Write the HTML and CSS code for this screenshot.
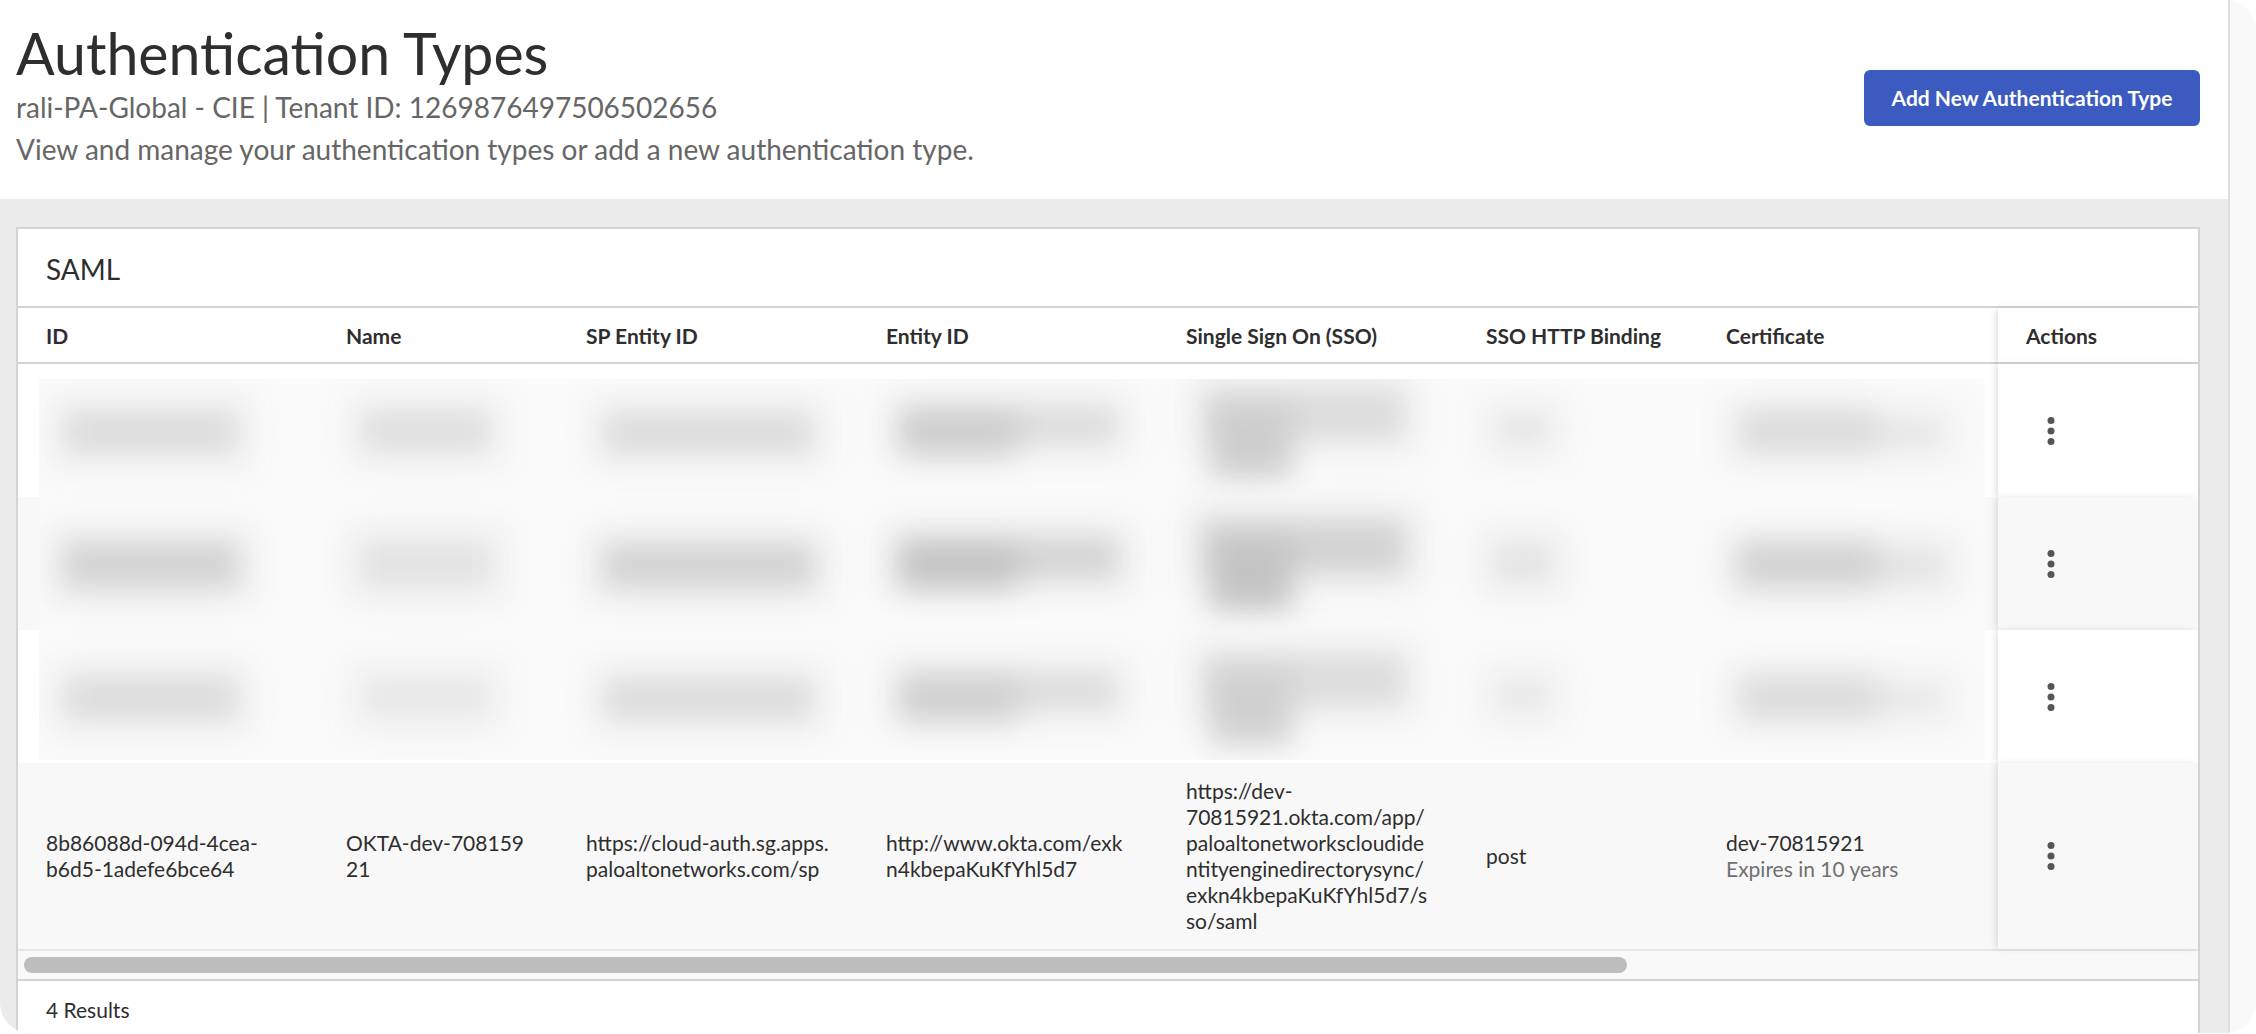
FILE: index.html
```html
<!DOCTYPE html>
<html lang="en">
<head>
<meta charset="utf-8">
<title>Authentication Types</title>
<link rel="stylesheet" href="styles.css">
</head>
<body>
<div class="frame">
  <main class="panel">
    <header class="page-head">
      <div class="head-text">
        <h1 class="title">Authentication Types</h1>
        <p class="tenant">rali-PA-Global - CIE | Tenant ID: 1269876497506502656</p>
        <p class="desc">View and manage your authentication types or add a new authentication type.</p>
      </div>
      <button class="primary" type="button">Add New Authentication Type</button>
    </header>
    <div class="content">
      <section class="card">
        <h2 class="card-title">SAML</h2>
        <div class="table-wrap">
          <table class="grid">
            <colgroup>
              <col class="c300"><col class="c240"><col class="c300"><col class="c300"><col class="c300"><col class="c240"><col class="c300"><col class="c200">
            </colgroup>
            <thead>
              <tr>
                <th>ID</th><th>Name</th><th>SP Entity ID</th><th>Entity ID</th><th>Single Sign On (SSO)</th><th>SSO HTTP Binding</th><th>Certificate</th><th class="sticky">Actions</th>
              </tr>
            </thead>
            <tbody>
              <tr class="blank"><td colspan="7"></td><td class="sticky"><svg class="kebab" viewBox="0 0 8 28"><circle cx="4" cy="3.6" r="3.5"/><circle cx="4" cy="14" r="3.5"/><circle cx="4" cy="24.4" r="3.5"/></svg></td></tr>
              <tr class="blank alt"><td colspan="7"></td><td class="sticky"><svg class="kebab" viewBox="0 0 8 28"><circle cx="4" cy="3.6" r="3.5"/><circle cx="4" cy="14" r="3.5"/><circle cx="4" cy="24.4" r="3.5"/></svg></td></tr>
              <tr class="blank"><td colspan="7"></td><td class="sticky"><svg class="kebab" viewBox="0 0 8 28"><circle cx="4" cy="3.6" r="3.5"/><circle cx="4" cy="14" r="3.5"/><circle cx="4" cy="24.4" r="3.5"/></svg></td></tr>
              <tr class="alt">
                <td>8b86088d-094d-4cea-<br>b6d5-1adefe6bce64</td>
                <td>OKTA-dev-708159<br>21</td>
                <td>https://cloud-auth.sg.apps.<br>paloaltonetworks.com/sp</td>
                <td>http://www.okta.com/exk<br>n4kbepaKuKfYhl5d7</td>
                <td>https://dev-<br>70815921.okta.com/app/<br>paloaltonetworkscloudide<br>ntityenginedirectorysync/<br>exkn4kbepaKuKfYhl5d7/s<br>so/saml</td>
                <td>post</td>
                <td>dev-70815921<div class="muted">Expires in 10 years</div></td>
                <td class="sticky"><svg class="kebab" viewBox="0 0 8 28"><circle cx="4" cy="3.6" r="3.5"/><circle cx="4" cy="14" r="3.5"/><circle cx="4" cy="24.4" r="3.5"/></svg></td>
              </tr>
            </tbody>
          </table>
          <div class="redaction" aria-hidden="true">
            <div class="smear r1"><i class="s id"></i><i class="s name"></i><i class="s sp"></i><i class="s ent2"></i><i class="s ent"></i><i class="s sso"></i><i class="s sso2"></i><i class="s bind"></i><i class="s cert2"></i><i class="s cert"></i></div>
            <div class="smear r2"><i class="s id"></i><i class="s name"></i><i class="s sp"></i><i class="s ent2"></i><i class="s ent"></i><i class="s sso"></i><i class="s sso2"></i><i class="s bind"></i><i class="s cert2"></i><i class="s cert"></i></div>
            <div class="smear r3"><i class="s id"></i><i class="s name"></i><i class="s sp"></i><i class="s ent2"></i><i class="s ent"></i><i class="s sso"></i><i class="s sso2"></i><i class="s bind"></i><i class="s cert2"></i><i class="s cert"></i></div>
          </div>
          <div class="scrollbar"><div class="thumb"></div></div>
        </div>
        <footer class="card-foot">4 Results</footer>
      </section>
    </div>
  </main>
  <div class="rail"></div>
</div>
</body>
</html>
```
FILE: styles.css
```css
* { box-sizing: border-box; }
html, body { margin: 0; height: 100%; overflow: hidden; background: #fff; }
body { font-family: Lato, "Noto Sans", sans-serif; color: #2e2e2e; }
.frame { display: flex; height: 1033px; width: 2256px; border-radius: 0 30px 30px 30px; overflow: hidden; }
.panel { width: 2230px; flex: none; display: flex; flex-direction: column; background: #ebebeb; border-right: 2px solid #e0e0e0; overflow: hidden; }
.rail { flex: 1; background: #f9f9f9; }
.page-head { height: 199px; flex: none; background: #fff; display: flex; justify-content: space-between; align-items: flex-start; padding: 0 28px 0 16px; }
.title { margin: 17px 0 0; font-size: 57.2px; line-height: 72px; font-weight: 400; color: #2e2e2e; }
.tenant { margin: 0; font-size: 28px; line-height: 36px; color: #666; }
.desc { margin: 6px 0 0; font-size: 28px; line-height: 36px; color: #666; }
.primary { margin-top: 70px; width: 336px; height: 56px; padding: 0 0 2px; border: 0; border-radius: 6px; background: #3c5bc0; color: #fff; font: 700 21px Lato, sans-serif; }
.content { flex: 1; padding: 28px 28px 0 16px; min-height: 0; }
.card { background: #fff; border: 2px solid #d4d4d4; border-bottom: 0; height: 100%; width: 2184px; }
.card-title { margin: 0; height: 79px; padding: 0 0 0 28px; font-size: 28px; line-height: 80px; font-weight: 400; color: #2e2e2e; border-bottom: 2px solid #d4d4d4; }
.table-wrap { position: relative; }
.grid { border-collapse: separate; border-spacing: 0; table-layout: fixed; width: 2180px; font-size: 21px; line-height: 26px; color: #2e2e2e; }
.c300 { width: 300px; }
.c240 { width: 240px; }
.c200 { width: 200px; }
.grid th { height: 56px; padding: 2px 0 0 28px; text-align: left; font-weight: 700; color: #2e2e2e; border-bottom: 2px solid #d4d4d4; }
.grid td { padding: 0 0 0 28px; height: 133px; vertical-align: middle; }
.grid tr.alt td { background: #f8f8f8; }
.grid tbody tr:last-child td { height: 186px; }
.muted { color: #707070; }
.sticky { box-shadow: -3px 0 7px -1px rgba(0,0,0,.13); position: relative; background: #fff; }
.kebab { width: 8px; height: 28px; fill: #555; display: block; margin-left: 21px; }
.redaction { position: absolute; left: 21px; top: 71px; width: 1946px; height: 381px; overflow: hidden; background: #fbfbfb; }
.smear { position: relative; height: 133px; filter: blur(15px); }
.s { position: absolute; background: var(--tone); box-shadow: 0 0 0 20px var(--halo); }
.r1 { --tone: #dcdcdc; --dark: #cecece; --light: #dedede; --halo: #f5f5f5; --pale: #e6e6e6; }
.r2 { --tone: #d2d2d2; --dark: #c4c4c4; --light: #e2e2e2; --halo: #f2f2f2; --pale: #e2e2e2; }
.r3 { --tone: #dcdcdc; --dark: #d0d0d0; --light: #e8e8e8; --halo: #f5f5f5; --pale: #e8e8e8; }
.id { left: 24px; top: 30px; width: 176px; height: 46px; }
.name { left: 322px; top: 30px; width: 130px; height: 44px; background: var(--light); }
.sp { left: 564px; top: 32px; width: 211px; height: 44px; }
.ent2 { left: 859px; top: 26px; width: 220px; height: 40px; }
.ent { left: 859px; top: 28px; width: 120px; height: 50px; background: var(--dark); box-shadow: none; }
.sso { left: 1163px; top: 8px; width: 204px; height: 54px; }
.sso2 { left: 1170px; top: 24px; width: 84px; height: 76px; background: var(--dark); box-shadow: none; }
.bind { left: 1456px; top: 32px; width: 56px; height: 36px; background: var(--pale); }
.cert2 { left: 1699px; top: 38px; width: 206px; height: 32px; background: var(--pale); }
.cert { left: 1699px; top: 28px; width: 140px; height: 48px; box-shadow: none; }
.scrollbar { height: 32px; background: #f9f9f9; border-top: 2px solid #e6e6e6; border-bottom: 2px solid #d4d4d4; padding: 6px 0 0 6px; }
.thumb { width: 1603px; height: 16px; border-radius: 8px; background: #bdbdbd; }
.card-foot { padding-left: 28px; font-size: 21px; line-height: 58px; color: #2e2e2e; }
```
